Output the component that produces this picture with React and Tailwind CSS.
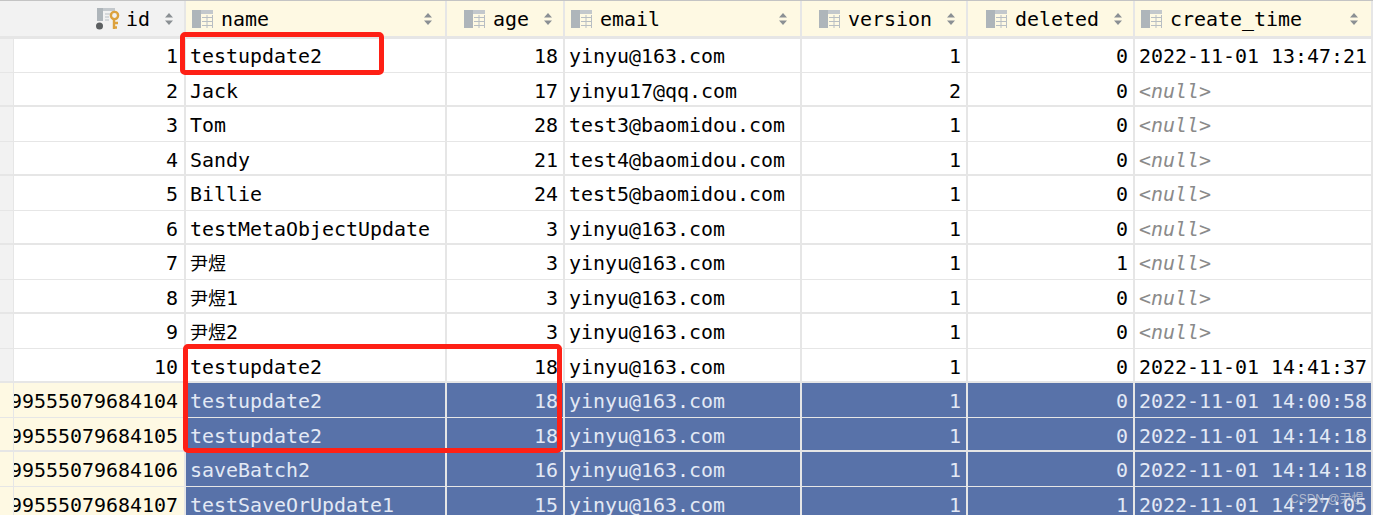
import React from 'react';

const GRID = 'grid grid-cols-[14px_172px_261px_118px_237px_166px_167px_238px]';
const MONO = 'font-["DejaVu_Sans_Mono","Noto_Sans_CJK_SC",monospace]';

const columns = [
  { label: 'name' },
  { label: 'age', right: true },
  { label: 'email' },
  { label: 'version', right: true },
  { label: 'deleted', right: true },
  { label: 'create_time' },
];

const rows = [
  ['1', 'testupdate2', '18', 'yinyu@163.com', '1', '0', '2022-11-01 13:47:21'],
  ['2', 'Jack', '17', 'yinyu17@qq.com', '2', '0', null],
  ['3', 'Tom', '28', 'test3@baomidou.com', '1', '0', null],
  ['4', 'Sandy', '21', 'test4@baomidou.com', '1', '0', null],
  ['5', 'Billie', '24', 'test5@baomidou.com', '1', '0', null],
  ['6', 'testMetaObjectUpdate', '3', 'yinyu@163.com', '1', '0', null],
  ['7', '尹煜', '3', 'yinyu@163.com', '1', '1', null],
  ['8', '尹煜1', '3', 'yinyu@163.com', '1', '0', null],
  ['9', '尹煜2', '3', 'yinyu@163.com', '1', '0', null],
  ['10', 'testupdate2', '18', 'yinyu@163.com', '1', '0', '2022-11-01 14:41:37'],
  ['1587299555079684104', 'testupdate2', '18', 'yinyu@163.com', '1', '0', '2022-11-01 14:00:58', true],
  ['1587299555079684105', 'testupdate2', '18', 'yinyu@163.com', '1', '0', '2022-11-01 14:14:18', true],
  ['1587299555079684106', 'saveBatch2', '16', 'yinyu@163.com', '1', '0', '2022-11-01 14:14:18', true],
  ['1587299555079684107', 'testSaveOrUpdate1', '15', 'yinyu@163.com', '1', '1', '2022-11-01 14:27:05', true],
];

const TableIcon = () => (
  <svg width="21" height="18" viewBox="0 0 21 18" className="shrink-0">
    <rect x="0" y="0" width="9" height="18" fill="#aeb5ba" />
    <rect x="9" y="0" width="12" height="4" fill="#c3c8cc" />
    <path d="M10 7.5h11M10 11.5h11M10 15.5h11M15 5v13M20.5 5v13" stroke="#b8bec3" strokeWidth="1" fill="none" />
  </svg>
);

const KeyIcon = () => (
  <svg width="24" height="22" viewBox="0 0 24 22" className="shrink-0">
    <rect x="1" y="0" width="6" height="13" fill="#aeb5ba" />
    <rect x="7" y="0" width="12" height="3" fill="#c3c8cc" />
    <path d="M9 6h5M9 9h4M9 12h4" stroke="#b8bec3" strokeWidth="1" fill="none" />
    <circle cx="3.5" cy="18" r="3.5" fill="#5c5f61" />
    <circle cx="18.5" cy="7.5" r="3.6" fill="none" stroke="#dca23e" strokeWidth="2.4" />
    <path d="M18 11v10M18 15h4M18 19.5h3" stroke="#dca23e" strokeWidth="2.4" fill="none" />
  </svg>
);

const SortIcon = () => (
  <svg width="8" height="12" viewBox="0 0 8 12" className="shrink-0">
    <path d="M4 0 8 4.6H0zM4 12 0 7.4h8z" fill="#8b9094" />
  </svg>
);

const HeaderCell = ({ label, right }) => (
  <div className={`flex items-center bg-[#fef9e3] border-r-2 border-[#e6e6e6] overflow-hidden ${right ? 'justify-end pr-[11px]' : 'pl-[6px] pr-[13px]'}`}>
    <TableIcon />
    <span className="ml-[8px] pt-[2px] text-black">{label}</span>
    <span className={right ? 'ml-[15px]' : 'ml-auto'}><SortIcon /></span>
  </div>
);

// the CJK names sit a bit smaller than the mono text around them
const cellText = (value) => {
  const m = typeof value === 'string' && value.match(/^(尹煜)(.*)$/);
  if (!m) return value;
  return (
    <>
      <span className="text-[18px]">{m[1]}</span>
      {m[2]}
    </>
  );
};

const Cell = ({ value, right, selected, pad }) => {
  const tone = selected ? 'bg-[#5872a9] text-[#e3e9f5]' : 'bg-white text-black';
  return (
    <div className={`flex items-center pl-[4px] pr-[5px] ${pad} border-r-2 border-[#e6e6e6] overflow-hidden whitespace-nowrap ${right ? 'justify-end' : ''} ${tone}`}>
      {value === null ? <span className="italic text-[#8a8a8a]">&lt;null&gt;</span> : <span>{cellText(value)}</span>}
    </div>
  );
};

const Row = ({ row, index }) => {
  const [id, name, age, email, version, deleted, created, selected] = row;
  const border = index % 2 === 0 ? 'border-b' : 'border-b-2';
  const height = index === 0 ? 'h-[34px]' : index % 2 === 0 ? 'h-[35px]' : 'h-[34px]';
  const pad = index % 2 === 0 ? 'pt-[3px]' : 'pt-[5px]';
  return (
    <div className={`${GRID} ${height} ${border} border-[#e6e6e6]`}>
      <div className={`border-r border-[#e6e6e6] ${selected ? 'bg-[#fef9e3]' : 'bg-[#f2f2f2]'}`} />
      <div className={`flex items-center justify-end pr-[6px] ${pad} border-r-2 border-[#e6e6e6] overflow-hidden whitespace-nowrap text-black ${selected ? 'bg-[#fef9e3]' : 'bg-white'}`}>
        {id}
      </div>
      <Cell value={name} selected={selected} pad={pad} />
      <Cell value={age} right selected={selected} pad={pad} />
      <Cell value={email} selected={selected} pad={pad} />
      <Cell value={version} right selected={selected} pad={pad} />
      <Cell value={deleted} right selected={selected} pad={pad} />
      <Cell value={created} selected={selected} pad={pad} />
    </div>
  );
};

export default function App() {
  return (
    <div className={`relative w-[1373px] h-[515px] overflow-hidden bg-white text-[19.95px] ${MONO}`}>
      <div className={`${GRID} h-[39px] border-t border-b-[3px] border-t-[#c4c4c4] border-b-[#e6e6e6]`}>
        <div className="col-span-2 flex items-center justify-end bg-[#f2f2f2] pr-[11px] border-r-2 border-[#e6e6e6]">
          <KeyIcon />
          <span className="ml-[6px] pt-[2px] text-black">id</span>
          <span className="ml-[15px]"><SortIcon /></span>
        </div>
        {columns.map((col) => (
          <HeaderCell key={col.label} label={col.label} right={col.right} />
        ))}
      </div>
      {rows.map((row, i) => (
        <Row key={row[0]} row={row} index={i} />
      ))}

      <div className="absolute left-[180px] top-[32px] w-[204px] h-[43px] border-[5px] border-[#fe2015] rounded-[5px]" />
      <div className="absolute left-[183px] top-[344px] w-[379px] h-[109px] border-[5px] border-[#fe2015] rounded-[5px]" />
      <div className="absolute left-[1290px] top-[490px] text-[12px] text-[#c9cdd6]/80 font-['Liberation_Sans','Noto_Sans_CJK_SC',sans-serif]">
        CSDN @尹煜
      </div>
    </div>
  );
}
